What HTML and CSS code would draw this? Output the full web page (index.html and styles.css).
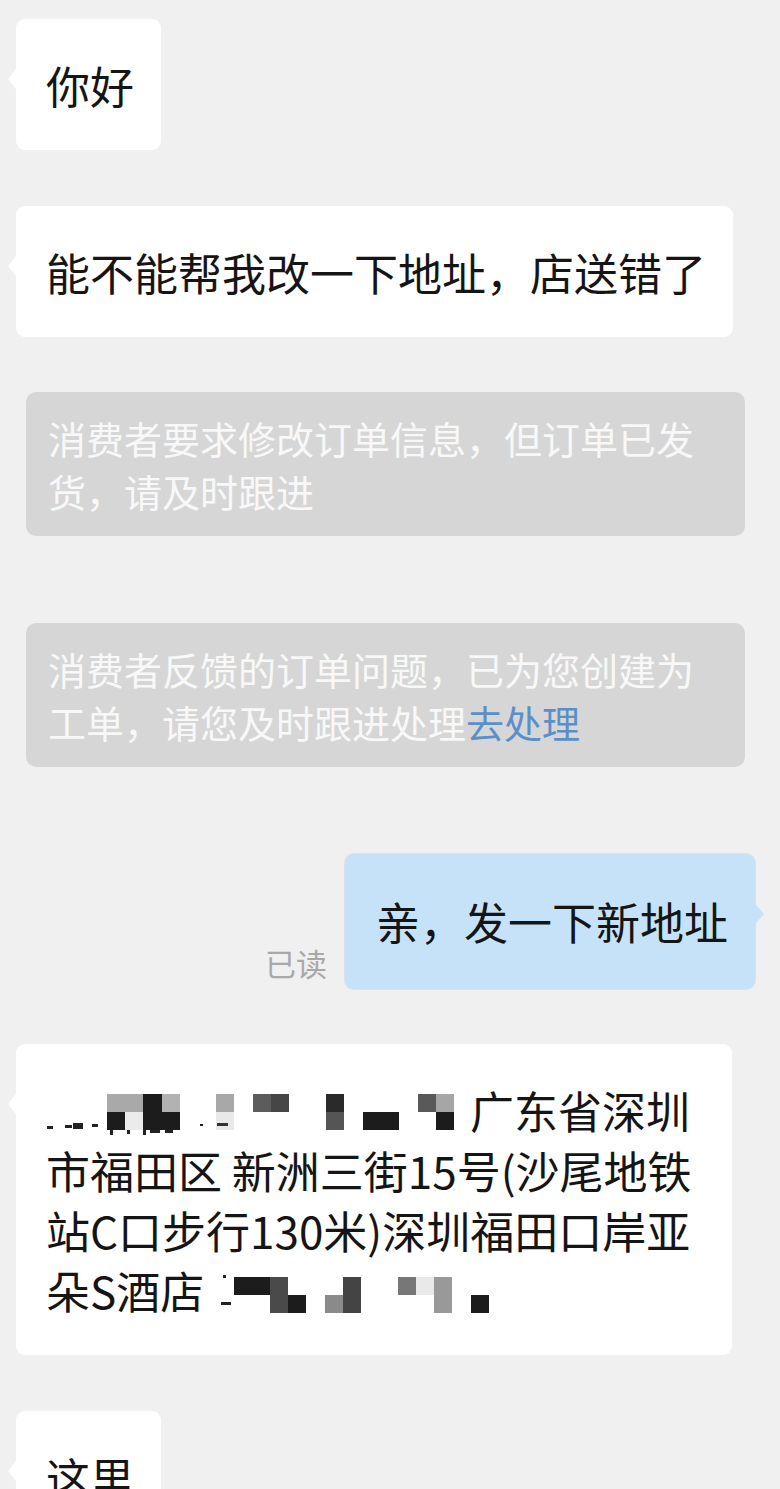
FILE: index.html
```html
<!DOCTYPE html>
<html lang="zh-CN">
<head>
<meta charset="utf-8">
<title>聊天记录</title>
<link rel="stylesheet" href="styles.css">
</head>
<body>
<div class="chat">
  <div class="row row-left first">
    <div class="bubble bubble-left">你好</div>
  </div>
  <div class="row row-left">
    <div class="bubble bubble-left">能不能帮我改一下地址，店送错了</div>
  </div>
  <div class="row row-sys">
    <div class="sys">消费者要求修改订单信息，但订单已发<br>货，请及时跟进</div>
  </div>
  <div class="row row-sys sys-gap">
    <div class="sys">消费者反馈的订单问题，已为您创建为<br>工单，请您及时跟进处理<span class="link">去处理</span></div>
  </div>
  <div class="row row-right sys-gap">
    <span class="read">已读</span>
    <div class="bubble bubble-right">亲，发一下新地址</div>
  </div>
  <div class="row row-left">
    <div class="bubble bubble-left bubble-addr">
      <div class="line">
        <svg class="mosaic" width="424" height="60" viewBox="0 0 424 60">
          <rect x="61" y="14" width="36" height="18" fill="#a9a9a9"/>
          <rect x="97" y="14" width="19" height="36" fill="#1c1c1c"/>
          <rect x="116" y="14" width="18" height="18" fill="#b2b2b2"/>
          <rect x="61" y="32" width="18" height="18" fill="#1c1c1c"/>
          <rect x="79" y="32" width="18" height="18" fill="#ebebeb"/>
          <rect x="116" y="32" width="18" height="18" fill="#1c1c1c"/>
          <rect x="170" y="14" width="18" height="18" fill="#a8a8a8"/>
          <rect x="170" y="32" width="18" height="18" fill="#e9e9e9"/>
          <rect x="207" y="14" width="18" height="18" fill="#5c5c5c"/>
          <rect x="225" y="14" width="18" height="18" fill="#464646"/>
          <rect x="280" y="14" width="18" height="18" fill="#2a2a2a"/>
          <rect x="280" y="32" width="18" height="18" fill="#555555"/>
          <rect x="317" y="32" width="36" height="18" fill="#1c1c1c"/>
          <rect x="372" y="14" width="18" height="18" fill="#595959"/>
          <rect x="390" y="14" width="18" height="18" fill="#a6a6a6"/>
          <rect x="390" y="32" width="18" height="18" fill="#1c1c1c"/>
          <rect x="1" y="46" width="6" height="3" fill="#222"/>
          <rect x="19" y="45" width="7" height="3" fill="#222"/>
          <rect x="27" y="43" width="10" height="6" fill="#222"/>
          <rect x="46" y="44" width="6" height="3" fill="#222"/>
          <rect x="64" y="50" width="3" height="5" fill="#222"/>
          <rect x="81" y="50" width="3" height="4" fill="#222"/>
          <rect x="97" y="50" width="3" height="5" fill="#222"/>
          <rect x="104" y="50" width="10" height="3" fill="#222"/>
          <rect x="119" y="50" width="8" height="3" fill="#222"/>
          <rect x="154" y="44" width="3" height="2" fill="#222"/>
          <rect x="171" y="43" width="11" height="3" fill="#333"/>
        </svg><span>广东省深圳</span>
      </div>
      <div class="line">市福田区 新洲三街15号(沙尾地铁</div>
      <div class="line">站C口步行130米)深圳福田口岸亚</div>
      <div class="line">
        <span>朵S酒店</span><svg class="mosaic" width="290" height="60" viewBox="0 0 290 60">
          <rect x="19" y="15" width="3" height="3" fill="#222"/>
          <rect x="17" y="42" width="10" height="3" fill="#222"/>
          <rect x="30" y="17" width="36" height="18" fill="#1c1c1c"/>
          <rect x="66" y="17" width="18" height="36" fill="#4a4a4a"/>
          <rect x="84" y="35" width="18" height="18" fill="#1c1c1c"/>
          <rect x="121" y="35" width="18" height="18" fill="#8a8a8a"/>
          <rect x="139" y="17" width="18" height="36" fill="#444444"/>
          <rect x="194" y="17" width="18" height="18" fill="#777777"/>
          <rect x="212" y="17" width="18" height="18" fill="#e9e9e9"/>
          <rect x="230" y="17" width="18" height="36" fill="#999999"/>
          <rect x="267" y="35" width="18" height="18" fill="#1c1c1c"/>
        </svg>
      </div>
    </div>
  </div>
  <div class="row row-left">
    <div class="bubble bubble-left">这里</div>
  </div>
</div>
</body>
</html>
```
FILE: styles.css
```css
html {
  overflow: hidden;
}

body {
  margin: 0;
  background: #f0f0f0;
  font-family: "Noto Sans CJK SC", "Noto Sans", sans-serif;
  color: #151515;
}

.chat {
  display: flex;
  flex-direction: column;
  padding-top: 19px;
}

.row {
  display: flex;
  margin-top: 56px;
}

.row.first {
  margin-top: 0;
}

.row-left {
  padding-left: 16px;
}

.row-sys {
  padding-left: 26px;
  margin-top: 55px;
}

.row-sys.sys-gap,
.row-right.sys-gap {
  margin-top: 87px;
}

.row-right {
  justify-content: flex-end;
  align-items: flex-end;
  padding-right: 25px;
}

.bubble {
  position: relative;
  box-sizing: border-box;
  padding: 36px 27px 35px 30px;
  font-size: 44px;
  line-height: 60px;
  border-radius: 9px;
  white-space: nowrap;
}

.bubble-left {
  background: #ffffff;
}

.bubble-left::before {
  content: "";
  position: absolute;
  left: -8px;
  top: 50px;
  border-top: 10px solid transparent;
  border-bottom: 10px solid transparent;
  border-right: 8px solid #ffffff;
}

.bubble-right {
  background: #c6e2f8;
  padding: 37px 27px 38px 31px;
  box-shadow: 0 0 0 1px rgba(120, 160, 200, 0.18);
}

.bubble-right::after {
  content: "";
  position: absolute;
  right: -9px;
  top: 50px;
  border-top: 10px solid transparent;
  border-bottom: 10px solid transparent;
  border-left: 9px solid #c6e2f8;
}

.read {
  font-size: 31px;
  line-height: 40px;
  color: #a8a8a8;
  margin-right: 18px;
  margin-bottom: 6px;
}

.sys {
  box-sizing: border-box;
  width: 719px;
  padding: 19px 22px;
  background: #d6d6d6;
  border-radius: 10px;
  color: #f8f8f8;
  font-size: 38px;
  line-height: 53px;
  white-space: nowrap;
}

.link {
  color: #5b8fc9;
}

.row-right + .row-left {
  margin-top: 55px;
}

.bubble-addr {
  width: 716px;
}

.line {
  display: flex;
  align-items: center;
  height: 60px;
}

.mosaic {
  flex: none;
  display: block;
}
```
